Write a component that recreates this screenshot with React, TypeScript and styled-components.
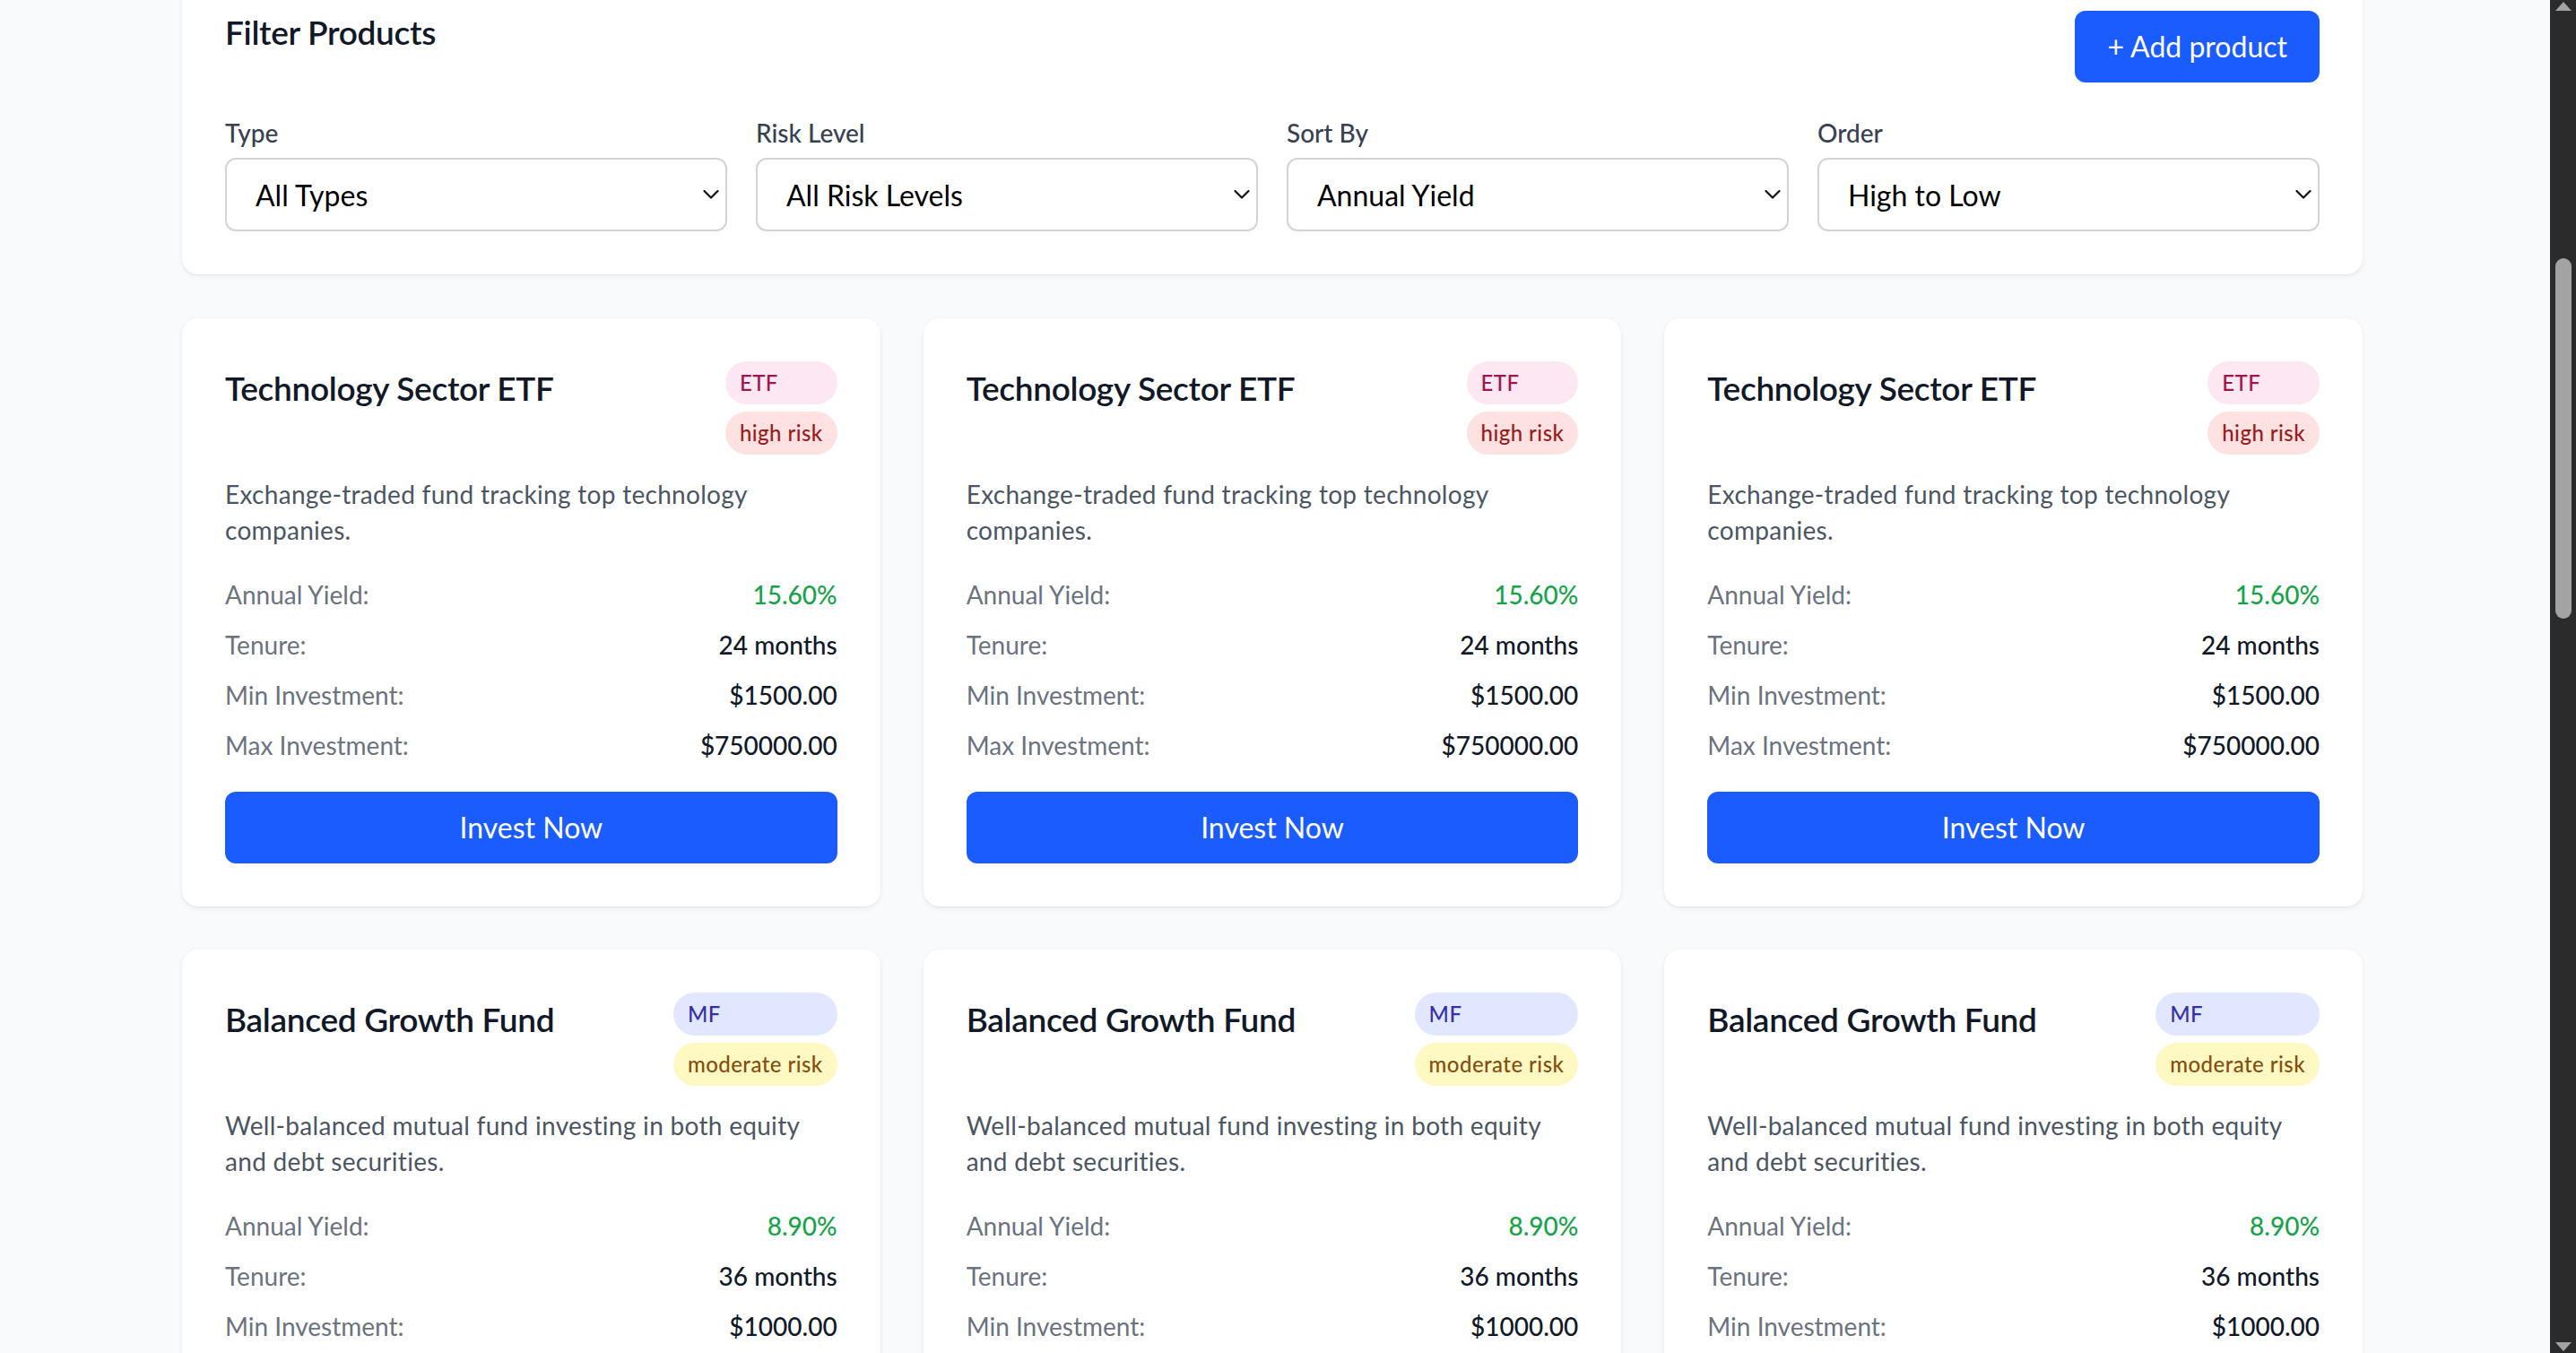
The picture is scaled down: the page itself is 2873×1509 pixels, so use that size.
import React, { useLayoutEffect, useRef } from "react";
import styled, { createGlobalStyle } from "styled-components";

const GlobalStyle = createGlobalStyle`
  *, *::before, *::after { box-sizing: border-box; }
  html, body { margin: 0; padding: 0; height: 100%; overflow: hidden; }
  body {
    font-family: Lato, "Noto Sans", "Liberation Sans", sans-serif;
    background: #f9fafb;
    color: #111827;
  }
  #root { height: 100%; }
`;

const Shell = styled.div`
  display: flex;
  width: 100vw;
  height: 100vh;
`;

const Viewport = styled.main`
  flex: 1;
  min-width: 0;
  overflow-y: auto;
  background: #f9fafb;
  scrollbar-width: none;
  &::-webkit-scrollbar { display: none; }
`;

const Container = styled.div`
  padding: 64px 209px 96px 203px;
`;

const ScrollTrack = styled.div`
  width: 29px;
  flex-shrink: 0;
  background: #2b2b2b;
  display: flex;
  flex-direction: column;
  align-items: center;
`;

const Arrow = styled.div<{ $dir: "up" | "down" }>`
  width: 0;
  height: 0;
  border-left: 9px solid transparent;
  border-right: 9px solid transparent;
  ${(p) =>
    p.$dir === "up"
      ? "border-bottom: 10px solid #a3a3a3; margin-top: 2px;"
      : "border-top: 10px solid #a3a3a3; margin-bottom: 2px;"}
`;

const Thumb = styled.div`
  width: 18px;
  border-radius: 9px;
  background: #a3a3a3;
`;

const TrackFill = styled.div`
  flex: 1;
`;

const Panel = styled.section`
  background: #ffffff;
  border-radius: 18px;
  box-shadow: 0 2px 6px rgba(17, 24, 39, 0.06), 0 1px 2px rgba(17, 24, 39, 0.05);
  padding: 48px;
`;

const FilterPanel = styled(Panel)`
  margin-bottom: 49px;
`;

const FilterHeader = styled.div`
  display: flex;
  justify-content: space-between;
  align-items: flex-start;
  margin-bottom: 36px;
`;

const FilterTitle = styled.h2`
  margin: 0;
  font-size: 37px;
  line-height: 48px;
  font-weight: 600;
  letter-spacing: -0.3px;
  color: #111827;
`;

const PrimaryButton = styled.button<{ $block?: boolean }>`
  font-family: inherit;
  font-size: 32px;
  line-height: 48px;
  font-weight: 400;
  color: #ffffff;
  background: #1a5cff;
  border: none;
  border-radius: 12px;
  padding: 16px 36px;
  cursor: pointer;
  width: ${(p) => (p.$block ? "100%" : "auto")};
`;

const FilterGrid = styled.div`
  display: grid;
  grid-template-columns: repeat(4, 1fr);
  gap: 32px;
`;

const Field = styled.label`
  display: flex;
  flex-direction: column;
`;

const FieldLabel = styled.span`
  font-size: 28px;
  line-height: 40px;
  font-weight: 500;
  color: #374151;
  margin-bottom: 8px;
`;

const SelectWrap = styled.div`
  position: relative;
`;

const Select = styled.select`
  appearance: none;
  -webkit-appearance: none;
  width: 100%;
  height: 82px;
  font-family: inherit;
  font-size: 32px;
  color: #000000;
  background: #ffffff;
  border: 2px solid #d1d5db;
  border-radius: 12px;
  padding: 0 48px 0 32px;
  outline: none;
`;

const Chevron = styled.svg`
  position: absolute;
  right: 9px;
  top: 50%;
  transform: translateY(-50%);
  pointer-events: none;
`;

const CardGrid = styled.div`
  display: grid;
  grid-template-columns: repeat(3, 1fr);
  gap: 48px;
`;

const CardHeader = styled.div`
  display: flex;
  justify-content: space-between;
  align-items: flex-start;
  margin-bottom: 24px;
`;

const CardTitle = styled.h3`
  margin: 0;
  font-size: 37px;
  line-height: 60px;
  font-weight: 600;
  letter-spacing: -0.3px;
  color: #111827;
`;

const BadgeStack = styled.div`
  display: flex;
  flex-direction: column;
  gap: 8px;
`;

const tones = {
  pink: { bg: "#fce7f3", fg: "#9d174d" },
  red: { bg: "#fee2e2", fg: "#991b1b" },
  indigo: { bg: "#e0e7ff", fg: "#3730a3" },
  yellow: { bg: "#fef9c3", fg: "#854d0e" },
};

type Tone = keyof typeof tones;

const Badge = styled.span<{ $tone: Tone }>`
  display: block;
  font-size: 24px;
  line-height: 32px;
  font-weight: 500;
  letter-spacing: 0.45px;
  padding: 8px 16px;
  border-radius: 9999px;
  background: ${(p) => tones[p.$tone].bg};
  color: ${(p) => tones[p.$tone].fg};
`;

const Description = styled.p`
  margin: 0 0 32px;
  font-size: 28px;
  line-height: 40px;
  letter-spacing: 0.3px;
  color: #4b5563;
`;

const Stats = styled.dl`
  margin: 0 0 32px;
  display: flex;
  flex-direction: column;
  gap: 16px;
`;

const StatRow = styled.div`
  display: flex;
  justify-content: space-between;
  font-size: 28px;
  line-height: 40px;
`;

const StatLabel = styled.dt`
  color: #6b7280;
`;

const StatValue = styled.dd<{ $accent?: boolean }>`
  margin: 0;
  font-weight: 500;
  color: ${(p) => (p.$accent ? "#16a34a" : "#111827")};
`;

type Product = {
  name: string;
  type: string;
  typeTone: Tone;
  risk: string;
  riskTone: Tone;
  description: string;
  yield: string;
  tenure: string;
  min: string;
  max: string;
};

const etf: Product = {
  name: "Technology Sector ETF",
  type: "ETF",
  typeTone: "pink",
  risk: "high risk",
  riskTone: "red",
  description: "Exchange-traded fund tracking top technology companies.",
  yield: "15.60%",
  tenure: "24 months",
  min: "$1500.00",
  max: "$750000.00",
};

const mf: Product = {
  name: "Balanced Growth Fund",
  type: "MF",
  typeTone: "indigo",
  risk: "moderate risk",
  riskTone: "yellow",
  description: "Well-balanced mutual fund investing in both equity and debt securities.",
  yield: "8.90%",
  tenure: "36 months",
  min: "$1000.00",
  max: "$500000.00",
};

const products: Product[] = [etf, etf, etf, mf, mf, mf];

const filters = [
  { label: "Type", value: "All Types" },
  { label: "Risk Level", value: "All Risk Levels" },
  { label: "Sort By", value: "Annual Yield" },
  { label: "Order", value: "High to Low" },
];

function FilterSelect({ label, value }: { label: string; value: string }) {
  return (
    <Field>
      <FieldLabel>{label}</FieldLabel>
      <SelectWrap>
        <Select defaultValue={value}>
          <option>{value}</option>
        </Select>
        <Chevron width="18" height="11" viewBox="0 0 18 11">
          <path d="M1.5 1.5 L9 9 L16.5 1.5" fill="none" stroke="#111" strokeWidth="2.2" strokeLinecap="round" strokeLinejoin="round" />
        </Chevron>
      </SelectWrap>
    </Field>
  );
}

function ProductCard({ p }: { p: Product }) {
  return (
    <Panel as="article">
      <CardHeader>
        <CardTitle>{p.name}</CardTitle>
        <BadgeStack>
          <Badge $tone={p.typeTone}>{p.type}</Badge>
          <Badge $tone={p.riskTone}>{p.risk}</Badge>
        </BadgeStack>
      </CardHeader>
      <Description>{p.description}</Description>
      <Stats>
        <StatRow>
          <StatLabel>Annual Yield:</StatLabel>
          <StatValue $accent>{p.yield}</StatValue>
        </StatRow>
        <StatRow>
          <StatLabel>Tenure:</StatLabel>
          <StatValue>{p.tenure}</StatValue>
        </StatRow>
        <StatRow>
          <StatLabel>Min Investment:</StatLabel>
          <StatValue>{p.min}</StatValue>
        </StatRow>
        <StatRow>
          <StatLabel>Max Investment:</StatLabel>
          <StatValue>{p.max}</StatValue>
        </StatRow>
      </Stats>
      <PrimaryButton $block>Invest Now</PrimaryButton>
    </Panel>
  );
}

const SCROLL_TOP = 100;
const THUMB = { top: 276, height: 402 };

export default function App() {
  const ref = useRef<HTMLElement>(null);
  useLayoutEffect(() => {
    if (ref.current) ref.current.scrollTop = SCROLL_TOP;
  }, []);

  return (
    <>
      <GlobalStyle />
      <Shell>
        <Viewport ref={ref}>
          <Container>
            <FilterPanel>
              <FilterHeader>
                <FilterTitle>Filter Products</FilterTitle>
                <PrimaryButton>+ Add product</PrimaryButton>
              </FilterHeader>
              <FilterGrid>
                {filters.map((f) => (
                  <FilterSelect key={f.label} label={f.label} value={f.value} />
                ))}
              </FilterGrid>
            </FilterPanel>
            <CardGrid>
              {products.map((p, i) => (
                <ProductCard key={i} p={p} />
              ))}
            </CardGrid>
          </Container>
        </Viewport>
        <ScrollTrack>
          <Arrow $dir="up" />
          <Thumb style={{ marginTop: THUMB.top, height: THUMB.height }} />
          <TrackFill />
          <Arrow $dir="down" />
        </ScrollTrack>
      </Shell>
    </>
  );
}
